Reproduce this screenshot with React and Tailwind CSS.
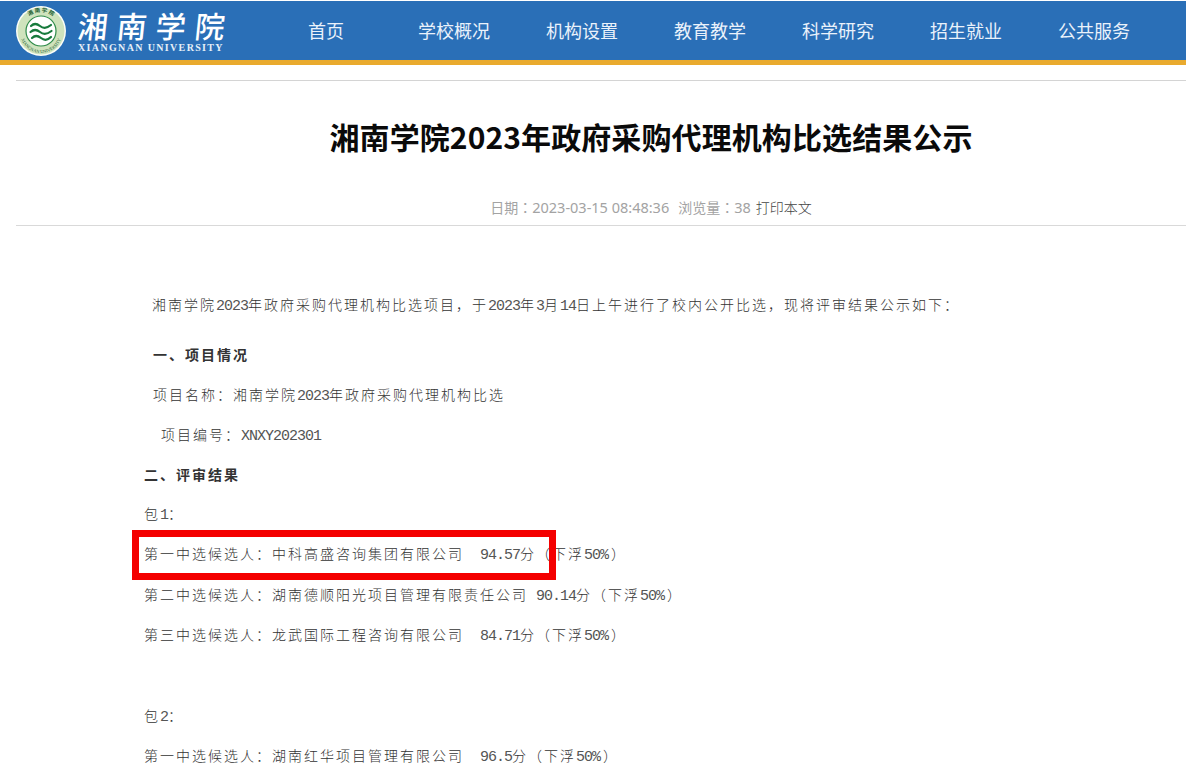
import React from "react";

const CJK = "font-['Noto_Sans_CJK_SC',sans-serif] text-[14px] tracking-[2px] font-light";
const CJKB = "font-['Noto_Sans_CJK_SC',sans-serif] text-[14px] tracking-[2px] font-bold";
const LAT = "font-['Liberation_Mono',monospace] text-[15px] tracking-[-1px] whitespace-pre text-[#555]";

function Mixed({ text, bold }) {
  const parts = text.split(/([A-Za-z0-9.%]+|\s+)/).filter(Boolean);
  return parts.map((p, i) =>
    /^[A-Za-z0-9.%\s]+$/.test(p) ? (
      <span key={i} className={LAT}>{p}</span>
    ) : (
      <span key={i} className={(bold ? CJKB : CJK) + (p === "）" ? " ml-[3px]" : "")}>{p}</span>
    )
  );
}

function Line({ text, className = "", bold }) {
  return (
    <p className={"h-10 leading-[40px] whitespace-nowrap text-[#333] " + className}>
      <Mixed text={text} bold={bold} />
    </p>
  );
}

function Logo() {
  return (
    <svg width="52" height="52" viewBox="0 0 52 52" className="shrink-0">
      <circle cx="26" cy="26" r="25" fill="#fbfdf7" />
      <circle cx="26" cy="26" r="23.5" fill="#cfe3bd" />
      <circle cx="26" cy="26" r="15" fill="#ffffff" stroke="#2f8b4a" strokeWidth="1.2" />
      <defs>
        <path id="sealTop" d="M7 26 A19 19 0 0 1 45 26" />
        <path id="sealBottom" d="M5 27 A21 21 0 0 0 47 27" />
      </defs>
      <text className="font-['Noto_Sans_CJK_SC',sans-serif]" fontSize="5.5" fontWeight="700" fill="#1d5e34">
        <textPath href="#sealTop" startOffset="50%" textAnchor="middle">湘 南 学 院</textPath>
      </text>
      <text className="font-['Liberation_Serif',serif]" fontSize="4.4" fill="#1d5e34">
        <textPath href="#sealBottom" startOffset="50%" textAnchor="middle">XIANGNAN UNIVERSITY</textPath>
      </text>
      <g fill="none" stroke="#177a3c" strokeWidth="2.2" strokeLinecap="round">
        <path d="M16 21 Q20 17 25 21 T36 20" />
        <path d="M15.5 27 Q20 23 25 27 T36.5 26" />
        <path d="M17 33 Q21 29 26 33 T36 32" />
      </g>
    </svg>
  );
}

export default function App() {
  const nav = ["首页", "学校概况", "机构设置", "教育教学", "科学研究", "招生就业", "公共服务"];
  return (
    <div className="w-[1186px] h-[780px] overflow-hidden bg-white font-['Noto_Sans_CJK_SC',sans-serif]">
      <header className="mt-[1px] h-[59px] bg-[#2a6fb7] flex items-center pl-[15px]">
        <Logo />
        <div className="ml-[11px] w-[148px] shrink-0 flex flex-col items-start text-white">
          <span className="text-[30px] leading-[33px] font-medium tracking-[9px] whitespace-nowrap -skew-x-6 font-['Noto_Sans_CJK_JP',sans-serif]">湘南学院</span>
          <span className="text-[10px] leading-[11px] font-bold tracking-[1.35px] whitespace-nowrap text-[#e6eff8] font-['Liberation_Serif',serif]">XIANGNAN UNIVERSITY</span>
        </div>
        <nav className="ml-[36px] flex">
          {nav.map((n) => (
            <a key={n} className="w-[128px] text-center text-[18px] text-[#eaf2fb] leading-[59px] font-normal">{n}</a>
          ))}
        </nav>
      </header>
      <div className="h-[5px] bg-[#e9aa2e]" />

      <main className="pl-4">
        <div className="mt-[15px] border-t border-[#d4d4d4]">
          <h1 className="pl-[100px] pt-[35px] text-center text-[#0a0a0a] text-[30px] leading-[40px] font-bold whitespace-nowrap tracking-[0.1px]">
            湘南学院2023年政府采购代理机构比选结果公示
          </h1>
          <div className="pl-[100px] mt-[41px] h-[25px] flex items-baseline justify-center whitespace-nowrap text-[14px] text-[#a3a3a3]">
            <span>日期<span className="font-['Noto_Sans_CJK_TC',sans-serif]">：</span></span>
            <span className="font-['Noto_Sans',sans-serif] text-[14.5px]">2023-03-15 08:48:36</span>
            <span className="ml-[9px]">浏览量<span className="font-['Noto_Sans_CJK_TC',sans-serif]">：</span></span>
            <span className="font-['Noto_Sans',sans-serif] text-[14.5px]">38</span>
            <span className="ml-[5px] text-[14px] text-[#444] font-light">打印本文</span>
          </div>
        </div>
        <div className="mt-[3px] border-t border-[#d9d9d9]" />

        <div className="mt-[57px] pl-[128px]">
          <Line className="pl-[8px]" text="湘南学院2023年政府采购代理机构比选项目，于2023年3月14日上午进行了校内公开比选，现将评审结果公示如下：" />
          <Line className="mt-[10px] pl-[9px]" bold text="一、项目情况" />
          <Line className="pl-[9px]" text="项目名称：湘南学院2023年政府采购代理机构比选" />
          <Line className="pl-[17px]" text="项目编号：XNXY202301" />
          <Line bold text="二、评审结果" />
          <Line text="包1：" className="-mt-[1px]" />
          <div className="relative">
            <Line text="第一中选候选人：中科高盛咨询集团有限公司  94.57分（下浮50%）" />
            <div className="absolute left-[-12px] top-[-2px] w-[424px] h-[50px] border-[7px] border-[#f40000]" />
          </div>
          <Line text="第二中选候选人：湖南德顺阳光项目管理有限责任公司 90.14分（下浮50%）" className="mt-[1px]" />
          <Line text="第三中选候选人：龙武国际工程咨询有限公司  84.71分（下浮50%）" />
          <Line text="包2：" className="mt-[41px]" />
          <Line text="第一中选候选人：湖南红华项目管理有限公司  96.5分（下浮50%）" />
        </div>
      </main>
    </div>
  );
}
